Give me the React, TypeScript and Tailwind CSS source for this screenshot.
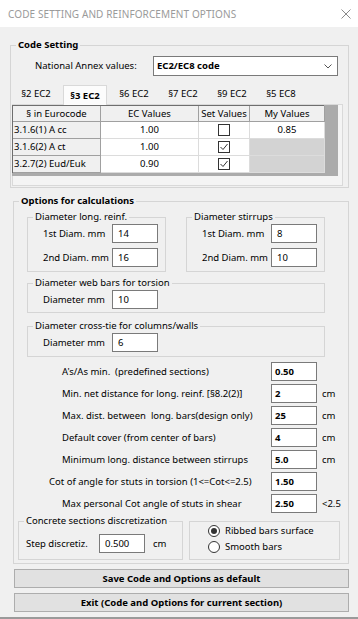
import React from "react";

const Group = ({
  title,
  className = "",
  children,
}: {
  title: string;
  className?: string;
  children: React.ReactNode;
}) => (
  <fieldset className={`border border-[#d5d5d5] ${className}`}>
    <legend className="ml-[5px] px-[2px] leading-[12px]">{title}</legend>
    {children}
  </fieldset>
);

const TextBox = ({
  value,
  bold = false,
  className = "w-[46px]",
}: {
  value: string;
  bold?: boolean;
  className?: string;
}) => (
  <div
    className={`h-[19px] shrink-0 bg-white border border-[#7a7a7a] flex items-center ${
      bold ? "font-bold pl-[3px]" : "pl-[5px]"
    } ${className}`}
  >
    {value}
  </div>
);

const Check = ({ checked }: { checked: boolean }) => (
  <svg width="12" height="12" viewBox="0 0 12 12">
    <rect x="0.5" y="0.5" width="11" height="11" fill="#fff" stroke="#333" />
    {checked && (
      <polyline
        points="2.5,6 5,8.5 9.5,3"
        fill="none"
        stroke="#333"
        strokeWidth="1"
      />
    )}
  </svg>
);

const Radio = ({ checked, label }: { checked: boolean; label: string }) => (
  <div className="h-[16px] flex items-center gap-[5px]">
    <svg width="12" height="12" viewBox="0 0 12 12">
      <circle cx="6" cy="6" r="5.5" fill="#fff" stroke="#333" />
      {checked && <circle cx="6" cy="6" r="3" fill="#333" />}
    </svg>
    <span>{label}</span>
  </div>
);

const tabs = ["§2 EC2", "§3 EC2", "§6 EC2", "§7 EC2", "§9 EC2", "§5 EC8"];

const tableRows = [
  { ref: "3.1.6(1) A cc", ec: "1.00", set: false, mine: "0.85" },
  { ref: "3.1.6(2) A ct", ec: "1.00", set: true, mine: "" },
  { ref: "3.2.7(2) Eud/Euk", ec: "0.90", set: true, mine: "" },
];

const options = [
  { label: "A's/As min.  (predefined sections)", value: "0.50", unit: "", pad: "pl-[48px]" },
  { label: "Min. net distance for long. reinf. [§8.2(2)]", value: "2", unit: "cm", pad: "pl-[48px]" },
  { label: "Max. dist. between  long. bars(design only)", value: "25", unit: "cm", pad: "pl-[48px]" },
  { label: "Default cover (from center of bars)", value: "4", unit: "cm", pad: "pl-[48px]" },
  { label: "Minimum long. distance between stirrups", value: "5.0", unit: "cm", pad: "pl-[48px]" },
  { label: "Cot of angle for stuts in torsion (1<=Cot<=2.5)", value: "1.50", unit: "", pad: "pl-[35px]" },
  { label: "Max personal Cot angle of stuts in shear", value: "2.50", unit: "<2.5", pad: "pl-[48px]" },
];

const DiamRow = ({ label, value }: { label: string; value: string }) => (
  <div className="flex items-center">
    <div className="w-[84px] pl-[15px] whitespace-nowrap">{label}</div>
    <TextBox value={value} />
  </div>
);

export default function App() {
  return (
    <div className="w-[358px] h-[619px] bg-[#f0f0f0] border-b-2 border-[#9a9a9a] text-black text-[9.5px] leading-[12px] font-['Noto_Sans',sans-serif] overflow-hidden">
      {/* title bar */}
      <div className="h-[27px] bg-white flex items-center justify-between pl-[8px] pr-[7px]">
        <span className="text-[10px] text-[#9a9a9a] tracking-[0.1px]">
          CODE SETTING AND REINFORCEMENT OPTIONS
        </span>
        <svg width="10" height="10" viewBox="0 0 10 10">
          <path d="M0.5 0.5 L9.5 9.5 M9.5 0.5 L0.5 9.5" stroke="#8a8a8a" strokeWidth="1" />
        </svg>
      </div>

      {/* code setting */}
      <Group title="Code Setting" className="mt-[12px] ml-[10px] w-[339px] pb-[1px] font-bold">
        <div className="font-normal">
          <div className="mt-[5px] flex items-center pl-[24px]">
            <div className="w-[118px]">National Annex values:</div>
            <div className="w-[185px] h-[20px] bg-white border border-[#7a7a7a] flex items-center justify-between pl-[3px] pr-[5px] font-bold">
              <span>EC2/EC8 code</span>
              <svg width="8" height="5" viewBox="0 0 8 5">
                <polyline points="0.5,0.5 4,4 7.5,0.5" fill="none" stroke="#555" />
              </svg>
            </div>
          </div>

          {/* tabs */}
          <div className="mt-[5px] ml-[1px] w-[331px]">
            <div className="h-[23px] flex items-end gap-[5px] pl-[2px]">
              {tabs.map((t, i) =>
                i === 1 ? (
                  <div
                    key={t}
                    className="w-[44px] h-[20px] bg-[#fcfcfc] border-x border-t border-[#d9d9d9] flex items-center justify-center font-bold -mb-[1px] relative"
                  >
                    {t}
                  </div>
                ) : (
                  <div key={t} className="w-[44px] h-[20px] flex items-center justify-center">
                    {t}
                  </div>
                )
              )}
            </div>
            <div className="h-[82px] border border-[#d9d9d9] bg-[#f4f4f4]">
              <div className="w-[326px] h-[71px] -ml-[1px] bg-[#ababab]">
                <div className="w-[312px] grid grid-cols-[88px_98px_51px_75px] border-l border-t border-[#6e6e6e]">
                  {["§ in Eurocode", "EC Values", "Set Values", "My Values"].map((h) => (
                    <div
                      key={h}
                      className="h-[16px] bg-[#f0f0f0] border-r border-b border-[#a0a0a0] flex items-center justify-center whitespace-nowrap"
                    >
                      {h}
                    </div>
                  ))}
                  {tableRows.map((r) => (
                    <React.Fragment key={r.ref}>
                      <div className="h-[17px] bg-[#f0f0f0] border-r border-b border-[#a0a0a0] flex items-center pl-[1px] whitespace-nowrap">
                        {r.ref}
                      </div>
                      <div className="h-[17px] bg-white border-r border-b border-[#dcdcdc] flex items-center justify-center">
                        {r.ec}
                      </div>
                      <div className="h-[17px] bg-white border-r border-b border-[#dcdcdc] flex items-center justify-center">
                        <Check checked={r.set} />
                      </div>
                      <div
                        className={`h-[17px] border-r border-b border-[#dcdcdc] flex items-center justify-center ${
                          r.mine ? "bg-white" : "bg-[#d3d3d3]"
                        }`}
                      >
                        {r.mine}
                      </div>
                    </React.Fragment>
                  ))}
                </div>
              </div>
            </div>
          </div>
        </div>
      </Group>

      {/* options for calculations */}
      <Group title="Options for calculations" className="mt-[7px] ml-[13px] w-[336px] pb-[3px] font-bold">
        <div className="font-normal">
          <div className="mt-[4px] ml-[13px] flex gap-[20px]">
            <Group title="Diameter long. reinf." className="w-[139px] pb-[4px]">
              <div className="mt-[1px] flex flex-col gap-[5px]">
                <DiamRow label="1st Diam. mm" value="14" />
                <DiamRow label="2nd Diam. mm" value="16" />
              </div>
            </Group>
            <Group title="Diameter stirrups" className="w-[139px] pb-[4px]">
              <div className="mt-[1px] flex flex-col gap-[5px]">
                <DiamRow label="1st Diam. mm" value="8" />
                <DiamRow label="2nd Diam. mm" value="10" />
              </div>
            </Group>
          </div>

          <Group title="Diameter web bars for torsion" className="mt-[5px] ml-[13px] w-[298px] pb-[3px]">
            <div className="mt-[1px]">
              <DiamRow label="Diameter mm" value="10" />
            </div>
          </Group>

          <Group title="Diameter cross-tie for columns/walls" className="mt-[7px] ml-[13px] w-[298px] pb-[4px]">
            <div className="mt-[1px]">
              <DiamRow label="Diameter mm" value="6" />
            </div>
          </Group>

          <div className="mt-[5px] flex flex-col gap-[3px]">
            {options.map((o) => (
              <div key={o.label} className="flex items-center">
                <div className={`w-[257px] whitespace-pre ${o.pad}`}>{o.label}</div>
                <TextBox value={o.value} bold />
                <span className="ml-[5px]">{o.unit}</span>
              </div>
            ))}
          </div>

          <div className="mt-[2px] ml-[4px] flex gap-[6px]">
            <Group title="Concrete sections discretization" className="w-[165px] pb-[5px]">
              <div className="mt-[7px] flex items-center">
                <div className="w-[80px] pl-[7px] whitespace-nowrap">Step discretiz.</div>
                <TextBox value="0.500" className="w-[46px]" />
                <span className="ml-[8px]">cm</span>
              </div>
            </Group>
            <div className="mt-[6px] w-[151px] h-[39px] border border-[#d5d5d5] pt-[1px] pl-[18px]">
              <Radio checked label="Ribbed bars surface" />
              <Radio checked={false} label="Smooth bars" />
            </div>
          </div>
        </div>
      </Group>

      {/* buttons */}
      <div className="mt-[5px] ml-[14px] w-[335px] flex flex-col gap-[5px] font-bold">
        <button className="h-[19px] bg-[#e1e1e1] border border-[#adadad] flex items-center justify-center">
          Save Code and Options as default
        </button>
        <button className="h-[19px] bg-[#e1e1e1] border border-[#adadad] flex items-center justify-center">
          Exit (Code and Options for current section)
        </button>
      </div>
    </div>
  );
}
